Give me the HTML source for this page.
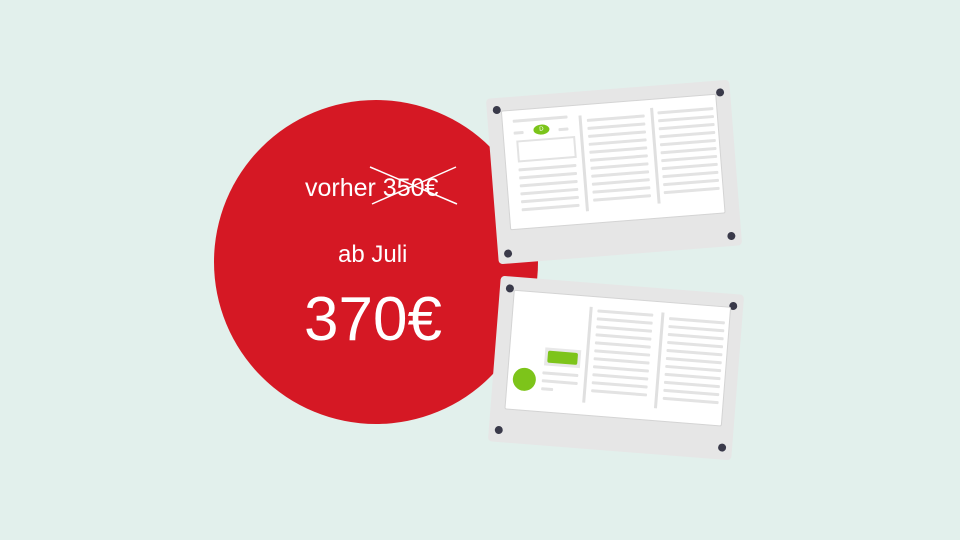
<!DOCTYPE html>
<html><head><meta charset="utf-8"><style>
html,body{margin:0;padding:0}
body{width:960px;height:540px;background:#e2f0ec;position:relative;overflow:hidden;font-family:"Liberation Sans",sans-serif}
.circle{position:absolute;left:214px;top:100px;width:324px;height:324px;border-radius:50%;background:#d51824}
.t{position:absolute;color:#fff;white-space:nowrap}
.panel{position:absolute;width:244px;height:166px;background:#e6e6e6;border-radius:4px}
.inner{position:absolute;background:#fff;border:1px solid #d4d4d4;border-radius:2px}
.s{position:absolute;width:8px;height:8px;border-radius:50%;background:#3a3a4a}
.l{position:absolute;height:3px;background:#e3e3e3;border-radius:1px}
.v{position:absolute;width:3px;background:#e0e0e0}
</style></head><body>
<div class="circle"></div>
<div class="t" style="left:305px;top:174px;font-size:25px">vorher 350€</div>
<svg style="position:absolute;left:0;top:0" width="960" height="540"><line x1="370" y1="167" x2="457" y2="204" stroke="#fff" stroke-width="1.5"/><line x1="372" y1="204" x2="456" y2="167" stroke="#fff" stroke-width="1.5"/></svg>
<div class="t" style="left:338px;top:241px;font-size:24px">ab Juli</div>
<div class="t" style="left:304px;top:284px;font-size:62px">370€</div>

<div class="panel" style="left:492px;top:89px;transform:rotate(-4.5deg)">
 <div class="s" style="left:6px;top:8px"></div><div class="s" style="right:6px;top:8px"></div>
 <div class="s" style="left:6px;bottom:6px"></div><div class="s" style="right:6px;bottom:6px"></div>
 <div class="inner" style="left:14px;top:13px;width:214px;height:118px">
  <div class="l" style="left:10px;top:9px;width:55px"></div>
  <div class="l" style="left:10px;top:21px;width:10px"></div>
  <div style="position:absolute;left:30px;top:16px;width:16px;height:10px;border-radius:50%;background:#7bc41a;color:#fff;font-size:6px;text-align:center;line-height:10px">D</div>
  <div class="l" style="left:55px;top:21px;width:10px"></div>
  <div style="position:absolute;left:12px;top:30px;width:55px;height:18px;border:2px solid #e3e3e3"></div>
  <div class="l" style="left:12px;top:58px;width:58px"></div><div class="l" style="left:12px;top:66px;width:58px"></div><div class="l" style="left:12px;top:74px;width:58px"></div><div class="l" style="left:12px;top:82px;width:58px"></div><div class="l" style="left:12px;top:90px;width:58px"></div><div class="l" style="left:12px;top:98px;width:58px"></div>
  <div class="v" style="left:76px;top:10px;height:96px"></div>
  <div class="l" style="left:84px;top:14px;width:58px"></div><div class="l" style="left:84px;top:22px;width:58px"></div><div class="l" style="left:84px;top:30px;width:58px"></div><div class="l" style="left:84px;top:38px;width:58px"></div><div class="l" style="left:84px;top:46px;width:58px"></div><div class="l" style="left:84px;top:54px;width:58px"></div><div class="l" style="left:84px;top:62px;width:58px"></div><div class="l" style="left:84px;top:70px;width:58px"></div><div class="l" style="left:84px;top:78px;width:58px"></div><div class="l" style="left:84px;top:86px;width:58px"></div><div class="l" style="left:84px;top:94px;width:58px"></div>
  <div class="v" style="left:148px;top:8px;height:96px"></div>
  <div class="l" style="left:155px;top:12px;width:56px"></div><div class="l" style="left:155px;top:20px;width:56px"></div><div class="l" style="left:155px;top:28px;width:56px"></div><div class="l" style="left:155px;top:36px;width:56px"></div><div class="l" style="left:155px;top:44px;width:56px"></div><div class="l" style="left:155px;top:52px;width:56px"></div><div class="l" style="left:155px;top:60px;width:56px"></div><div class="l" style="left:155px;top:68px;width:56px"></div><div class="l" style="left:155px;top:76px;width:56px"></div><div class="l" style="left:155px;top:84px;width:56px"></div><div class="l" style="left:155px;top:92px;width:56px"></div>
 </div>
</div>

<div class="panel" style="left:494px;top:285px;transform:rotate(4.5deg)">
 <div class="s" style="left:6px;top:8px"></div><div class="s" style="right:6px;top:8px"></div>
 <div class="s" style="left:6px;bottom:8px"></div><div class="s" style="right:6px;bottom:8px"></div>
 <div class="inner" style="left:14px;top:13px;width:216px;height:118px">
  <div style="position:absolute;left:35px;top:54px;width:36px;height:18px;background:#e8e8e8"></div>
  <div style="position:absolute;left:38px;top:57px;width:30px;height:12px;background:#7dc41a;border-radius:2px"></div>
  <div style="position:absolute;left:5px;top:76px;width:23px;height:23px;border-radius:50%;background:#7dc41a"></div>
  <div class="l" style="left:34px;top:78px;width:36px"></div><div class="l" style="left:34px;top:86px;width:36px"></div><div class="l" style="left:34px;top:94px;width:12px"></div>
  <div class="v" style="left:76px;top:10px;height:96px"></div>
  <div class="l" style="left:84px;top:12px;width:56px"></div><div class="l" style="left:84px;top:20px;width:56px"></div><div class="l" style="left:84px;top:28px;width:56px"></div><div class="l" style="left:84px;top:36px;width:56px"></div><div class="l" style="left:84px;top:44px;width:56px"></div><div class="l" style="left:84px;top:52px;width:56px"></div><div class="l" style="left:84px;top:60px;width:56px"></div><div class="l" style="left:84px;top:68px;width:56px"></div><div class="l" style="left:84px;top:76px;width:56px"></div><div class="l" style="left:84px;top:84px;width:56px"></div><div class="l" style="left:84px;top:92px;width:56px"></div>
  <div class="v" style="left:148px;top:10px;height:96px"></div>
  <div class="l" style="left:156px;top:14px;width:56px"></div><div class="l" style="left:156px;top:22px;width:56px"></div><div class="l" style="left:156px;top:30px;width:56px"></div><div class="l" style="left:156px;top:38px;width:56px"></div><div class="l" style="left:156px;top:46px;width:56px"></div><div class="l" style="left:156px;top:54px;width:56px"></div><div class="l" style="left:156px;top:62px;width:56px"></div><div class="l" style="left:156px;top:70px;width:56px"></div><div class="l" style="left:156px;top:78px;width:56px"></div><div class="l" style="left:156px;top:86px;width:56px"></div><div class="l" style="left:156px;top:94px;width:56px"></div>
 </div>
</div>
</body></html>
